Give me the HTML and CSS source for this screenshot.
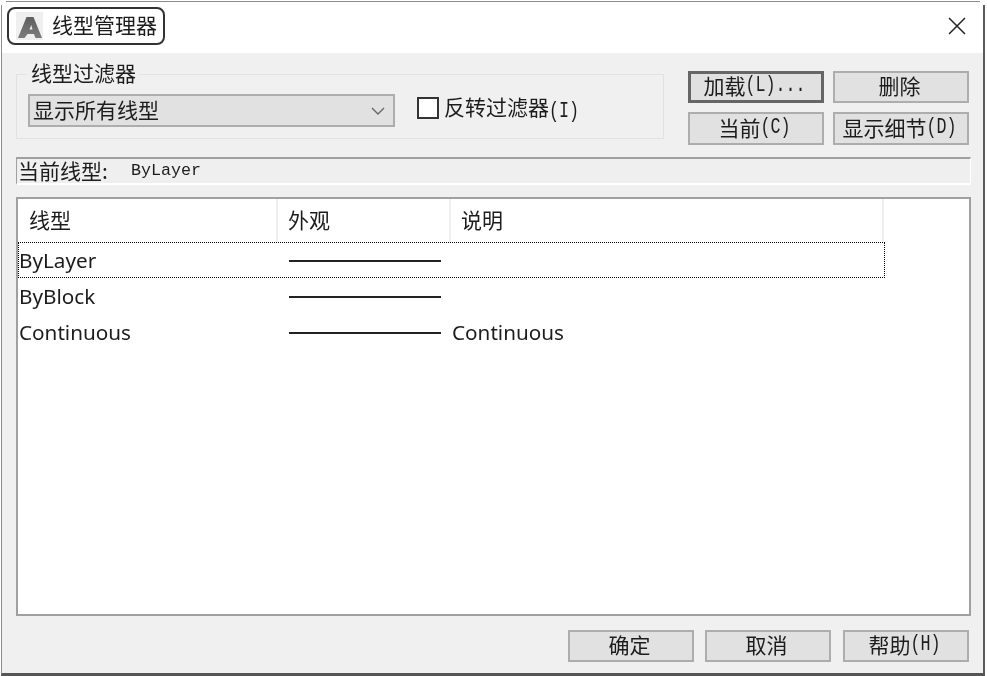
FILE: index.html
```html
<!DOCTYPE html>
<html lang="zh">
<head>
<meta charset="utf-8">
<title>线型管理器</title>
<link rel="stylesheet" href="styles.css">
</head>
<body>
<div class="window">
  <header class="titlebar">
    <div class="title-box">
      <svg class="app-icon" viewBox="0 0 27 28" aria-hidden="true">
        <defs><linearGradient id="a-fill" x1="0" y1="0" x2="0" y2="1"><stop offset="0" stop-color="#5f5f5f"/><stop offset="1" stop-color="#7c7c7c"/></linearGradient></defs>
        <rect width="27" height="28" fill="#efefef"/>
        <path d="M10.5 5H17.5L26 26H19.5L18 22H11.5L8.5 26H2Z M13.5 17.5H16.5L15.3 13Z" fill="url(#a-fill)" fill-rule="evenodd"/>
      </svg>
      <span class="title-text">线型管理器</span>
    </div>
    <svg class="close" viewBox="0 0 18 18" aria-hidden="true"><path d="M1 1L17 17M17 1L1 17" stroke="#222" stroke-width="1.5" fill="none"/></svg>
  </header>
  <main class="content">
    <section class="top">
      <div class="group">
        <span class="legend">线型过滤器</span>
        <div class="combo">
          <span>显示所有线型</span>
          <svg class="chevron" viewBox="0 0 14 8" aria-hidden="true"><path d="M1 1L7 7L13 1" stroke="#666" stroke-width="1.4" fill="none"/></svg>
        </div>
        <label class="check"><span class="box"></span><span class="check-text">反转过滤器<span class="mono">(I)</span></span></label>
      </div>
      <div class="actions">
        <div class="btn btn-default"><span>加载</span><span class="mono">(L)...</span></div>
        <div class="btn"><span>删除</span></div>
        <div class="btn"><span>当前</span><span class="mono">(C)</span></div>
        <div class="btn"><span>显示细节</span><span class="mono">(D)</span></div>
      </div>
    </section>
    <div class="current"><span class="current-label">当前线型:</span><span class="current-value">ByLayer</span></div>
    <section class="list">
      <div class="list-head">
        <div class="head-cell head-first">线型</div>
        <div class="head-cell">外观</div>
        <div class="head-cell">说明</div>
      </div>
      <div class="list-row list-row-focus">
        <div class="cell-name">ByLayer</div>
        <div class="cell-look"><span class="stroke"></span></div>
        <div class="cell-desc"></div>
      </div>
      <div class="list-row">
        <div class="cell-name">ByBlock</div>
        <div class="cell-look"><span class="stroke"></span></div>
        <div class="cell-desc"></div>
      </div>
      <div class="list-row">
        <div class="cell-name">Continuous</div>
        <div class="cell-look"><span class="stroke"></span></div>
        <div class="cell-desc">Continuous</div>
      </div>
    </section>
    <footer class="footer">
      <div class="btn btn-foot"><span>确定</span></div>
      <div class="btn btn-foot btn-mid"><span>取消</span></div>
      <div class="btn btn-foot"><span>帮助</span><span class="mono">(H)</span></div>
    </footer>
  </main>
</div>
</body>
</html>
```
FILE: styles.css
```css
* { box-sizing: border-box; }
html, body { margin: 0; padding: 0; background: #fff; }
body { width: 987px; height: 676px; overflow: hidden; font-family: "Noto Sans CJK SC", "Noto Sans", sans-serif; font-size: 21px; color: #1c1c1c; }

.window {
  position: relative;
  width: 984px; height: 675px;
  margin: 1px 0 0 1px;
  border-top: 1px solid #8c8c8c;
  border-left: 1px solid #8c8c8c;
  border-right: 2px solid #5a5a5a;
  border-bottom: 3px solid #555;
  display: flex; flex-direction: column;
  background: #f0f0f0;
  filter: blur(0.35px);
}
.window::before, .window::after { content: ""; position: absolute; top: -1px; width: 5px; height: 4px; background: #fff; }
.window::before { left: -1px; }
.window::after { right: -2px; }

.titlebar { height: 51px; flex: none; background: #fff; display: flex; align-items: flex-start; justify-content: space-between; padding: 5px 17px 0 5px; }
.title-box { width: 158px; height: 38px; border: 2px solid #333; border-radius: 8px; display: flex; align-items: center; padding-left: 7px; gap: 9px; background: #fff; }
.app-icon { width: 27px; height: 28px; flex: none; }
.title-text { line-height: 1; white-space: nowrap; padding-bottom: 3px; }
.close { width: 18px; height: 18px; margin-top: 10px; }

.content { flex: 1; padding: 18px 12px 0 14px; display: flex; flex-direction: column; }
.mono { display: inline-block; font-family: "Liberation Mono", "DejaVu Sans Mono", monospace; font-size: 16.7px; line-height: 1; transform: translateY(1px) scaleY(1.3); }

.top { display: flex; justify-content: space-between; align-items: flex-start; padding-right: 2px; }
.group { position: relative; width: 648px; height: 65px; margin-top: 3px; border: 1px solid #e2e2e2; padding: 19px 0 0 11px; display: flex; align-items: flex-start; }
.legend { position: absolute; left: 10px; top: -15px; padding: 0 3px 0 4px; background: #f0f0f0; line-height: 24px; }
.combo { width: 367px; height: 33px; background: #e1e1e1; border: 2px solid #adadad; display: flex; align-items: center; justify-content: space-between; padding: 0 8px 2px 3px; line-height: 1; }
.chevron { width: 14px; height: 8px; margin-top: 2px; }
.check { display: flex; align-items: center; gap: 5px; margin: 3px 0 0 22px; height: 22px; line-height: 1; white-space: nowrap; }
.box { width: 22px; height: 22px; border: 2px solid #333; background: #fff; flex: none; }

.actions { display: grid; grid-template-columns: 136px 136px; grid-template-rows: 32px 33px; gap: 9px; }
.btn { background: #e1e1e1; border: 2px solid #adadad; display: flex; align-items: center; justify-content: center; padding: 0 3px 3px 0; line-height: 1; white-space: nowrap; }
.btn-default { border: 3px solid #666; }

.current { height: 28px; margin-top: 12px; border-top: 2px solid #a0a0a0; border-left: 1px solid #a0a0a0; border-right: 1px solid #fff; border-bottom: 2px solid #fff; display: flex; align-items: center; padding-left: 1px; line-height: 1; background: #efefef; }
.current-label { width: 113px; flex: none; white-space: nowrap; padding-bottom: 2px; }
.current-value { font-family: "Liberation Mono", monospace; font-size: 16.7px; }

.list { height: 419px; margin-top: 12px; border: 2px solid #a0a0a0; background: #fff; }
.list-head, .list-row { display: grid; grid-template-columns: 260px 173px 433px; }
.list-head { height: 43px; }
.head-cell { border-right: 2px solid #efefef; padding: 0 0 4px 10px; display: flex; align-items: center; }
.head-first { padding-left: 11px; }
.list-row { height: 36px; align-items: center; font-family: "Noto Sans", sans-serif; font-size: 20.7px; width: 867px; }
.list-row-focus { outline: 1px dotted #000; outline-offset: -1px; }
.cell-name { padding-left: 1px; }
.cell-look { padding-left: 11px; display: flex; align-items: center; }
.stroke { display: block; width: 152px; height: 2px; background: #222; margin-top: 1px; }
.cell-desc { padding-left: 1px; }

.footer { margin-top: 14px; display: flex; justify-content: flex-end; gap: 11px; padding-right: 2px; }
.btn-foot { width: 126px; height: 32px; }
.btn-mid { margin-right: 1px; }
```
